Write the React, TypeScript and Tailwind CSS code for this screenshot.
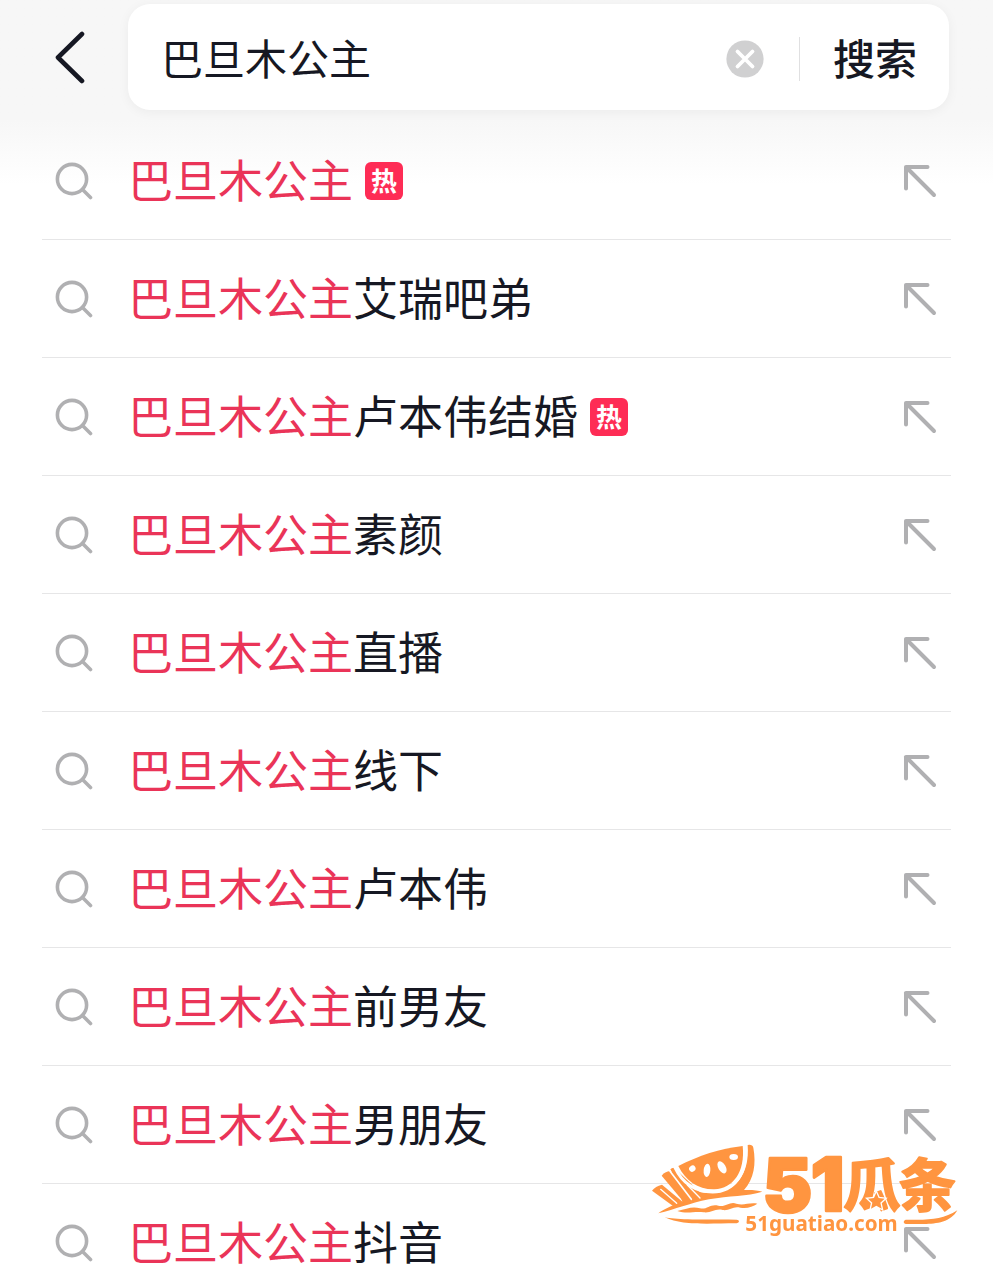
import { useState } from "react";

type TSuggestion = {
  id: number;
  rest: string;
  hot?: boolean;
};

const KEYWORD = "巴旦木公主";

const suggestions: TSuggestion[] = [
  { id: 1, rest: "", hot: true },
  { id: 2, rest: "艾瑞吧弟" },
  { id: 3, rest: "卢本伟结婚", hot: true },
  { id: 4, rest: "素颜" },
  { id: 5, rest: "直播" },
  { id: 6, rest: "线下" },
  { id: 7, rest: "卢本伟" },
  { id: 8, rest: "前男友" },
  { id: 9, rest: "男朋友" },
  { id: 10, rest: "抖音" },
];

const BackIcon = () => (
  <svg width="32" height="54" viewBox="0 0 32 54" fill="none" aria-hidden="true">
    <path
      d="M28 4 4 27.5 28 51"
      stroke="#161823"
      strokeWidth="4.6"
      strokeLinecap="round"
      strokeLinejoin="round"
    />
  </svg>
);

const SearchIcon = () => (
  <svg width="38" height="38" viewBox="0 0 38 38" fill="none" aria-hidden="true">
    <g stroke="#b0b0b2" strokeWidth="3.6" strokeLinecap="round">
      <circle cx="17" cy="17" r="14.6" />
      <path d="m28 28 7.5 7.5" />
    </g>
  </svg>
);

const FillArrowIcon = () => (
  <svg width="34" height="34" viewBox="0 0 34 34" fill="none" aria-hidden="true">
    <path
      d="M24.5 3H3v21.5M3 3l28 28"
      stroke="#b0b0b2"
      strokeWidth="4"
      strokeLinecap="round"
      strokeLinejoin="round"
    />
  </svg>
);

const ClearIcon = () => (
  <svg width="38" height="38" viewBox="0 0 38 38" aria-hidden="true">
    <circle cx="19" cy="19" r="18.6" fill="#d0d0d1" />
    <path
      d="m11.5 11.5 15 15m0-15-15 15"
      stroke="#fff"
      strokeWidth="3.8"
      strokeLinecap="round"
    />
  </svg>
);

const HotBadge = () => (
  <span className="flex size-[38px] items-center justify-center rounded-md bg-[#fe2c55] pb-0.5 text-[26px] leading-none font-bold text-white">
    热
  </span>
);

const Watermark = () => (
  <svg
    className="pointer-events-none fixed right-[33px] bottom-[42px] overflow-visible"
    width="310"
    height="96"
    viewBox="30 36 930 288"
    fill="#ff9540"
  >
    {/* rind and boat */}
    <path d="M323 45q14-3 17 8c9 49 2 93-28 127 18-1 42 0 55 5-45 14-100 12-160 23-60 12-100 30-152 42 18-15 46-25 72-35L92 118l8-5c22 37 42 68 92 75 88 10 138-49 131-143Z" />
    {/* flesh */}
    <path d="M115 108C175 77 240 56 308 48c8 76-28 128-85 130-49 1-86-25-108-70Z" />
    {/* sticks on the left */}
    <path d="M36 182q10-14 30-18l66 55-32 10Z" />
    <path d="M65 137q9-12 26-14l80 83-38 12Z" />
    <path d="M91 118q6-5 12-4l93 88-26 6Z" />
    <g stroke="#fff" fill="none" strokeLinecap="round">
      <path d="m62 178 48 42" strokeWidth="4" />
      <path d="m90 124 64 84" strokeWidth="5" />
      <path d="m142 165 38 39" strokeWidth="4" />
      <path d="M105 113c23 49 60 72 113 73 62 0 106-52 98-140" strokeWidth="9" />
    </g>
    {/* seeds */}
    <g fill="#fff">
      <ellipse cx="157" cy="116" rx="10" ry="9" transform="rotate(-35 157 116)" />
      <ellipse cx="201" cy="121" rx="10" ry="20" transform="rotate(5 201 121)" />
      <ellipse cx="246" cy="112" rx="11" ry="20" transform="rotate(-30 246 112)" />
      <ellipse cx="281" cy="81" rx="13" ry="9" />
    </g>
    {/* water */}
    <path d="M112 243c28-7 46-15 68-8 21 5 31-15 55-8 22 6 34-14 54-6 22 7 36-4 63 0-14 9-31 16-51 12-22-6-32 10-53 7-23-6-34 10-57 7-29-4-49 6-79-4Z" />
    <path d="M74 262c35 7 80 7 216 7q7 0 7 5t-7 6c-100 1-165 6-216-18Z" />
    <path d="M797 269c70 2 110 0 155-28-19 35-62 41-100 41h-55q-6-1-6-6t6-7Z" />
    <g stroke="#ff9540" strokeLinejoin="round">
      <g
        className="font-['Inter',sans-serif] font-black"
        fontSize="222"
        strokeWidth="8"
      >
        <text x="368" y="246">5</text>
        <text x="512" y="243">1</text>
      </g>
      <g
        className="font-['Noto_Sans_CJK_SC',sans-serif] font-bold"
        fontSize="172"
        strokeWidth="6"
      >
        <text x="610" y="228">瓜</text>
        <text x="776" y="228">条</text>
      </g>
    </g>
    <path
      d="m709 188 7 16 18 2-13 12 4 18-16-9-16 9 4-18-13-12 18-2Z"
      stroke="#fff"
      strokeWidth="8"
      paintOrder="stroke"
    />
    <text
      x="316"
      y="303"
      className="font-['Noto_Sans',sans-serif] font-bold"
      fontSize="62"
    >
      51guatiao.com
    </text>
  </svg>
);

const SuggestionItem = ({
  item,
  onFill,
}: {
  item: TSuggestion;
  onFill: (value: string) => void;
}) => (
  <li className="flex h-[118px] items-center border-b border-[#e6e6e7] pr-3.5 pl-[13px]">
    <a href="#" className="flex flex-1 items-center">
      <SearchIcon />
      <span className="ml-[35px] pb-1 text-[45px] leading-none whitespace-nowrap text-[#161823]">
        <span className="text-[#ea3458]">{KEYWORD}</span>
        {item.rest}
      </span>
      {item.hot && (
        <span className="ml-3">
          <HotBadge />
        </span>
      )}
    </a>
    <button
      type="button"
      aria-label={`填入 ${KEYWORD}${item.rest}`}
      onClick={() => onFill(KEYWORD + item.rest)}
      className="cursor-pointer"
    >
      <FillArrowIcon />
    </button>
  </li>
);

export default function App() {
  const [query, setQuery] = useState(KEYWORD);

  return (
    <main className="h-screen overflow-hidden bg-white font-['Noto_Sans_CJK_SC',sans-serif]">
      <div className="bg-linear-to-b from-[#f7f7f7] from-[120px] to-white to-[184px]">
        <header className="flex h-[122px] items-start pt-1 pr-11 pl-[54px]">
          <button
            type="button"
            aria-label="返回"
            className="mt-[26px] mr-[42px] cursor-pointer"
          >
            <BackIcon />
          </button>
          <form
            onSubmit={(event) => event.preventDefault()}
            className="flex h-[106px] min-w-0 flex-1 items-center rounded-[22px] bg-white pt-1 pr-8 pl-[33px] shadow-[0_2px_12px_rgba(0,0,0,0.05)]"
          >
            <input
              aria-label="搜索内容"
              value={query}
              onChange={(event) => setQuery(event.target.value)}
              className="h-20 min-w-0 flex-1 pb-1.5 text-[42px] text-[#161823] outline-none"
            />
            <button
              type="button"
              aria-label="清除"
              onClick={() => setQuery("")}
              className="cursor-pointer"
            >
              <ClearIcon />
            </button>
            <span className="mr-[33px] ml-[35px] h-11 w-px bg-[#e0e0e1]" />
            <button
              type="submit"
              className="cursor-pointer pb-1 text-[42px] leading-none font-medium text-[#161823]"
            >
              搜索
            </button>
          </form>
        </header>
        <ul className="mx-[42px]">
          {suggestions.map((item) => (
            <SuggestionItem key={item.id} item={item} onFill={setQuery} />
          ))}
        </ul>
      </div>
      <Watermark />
    </main>
  );
}
